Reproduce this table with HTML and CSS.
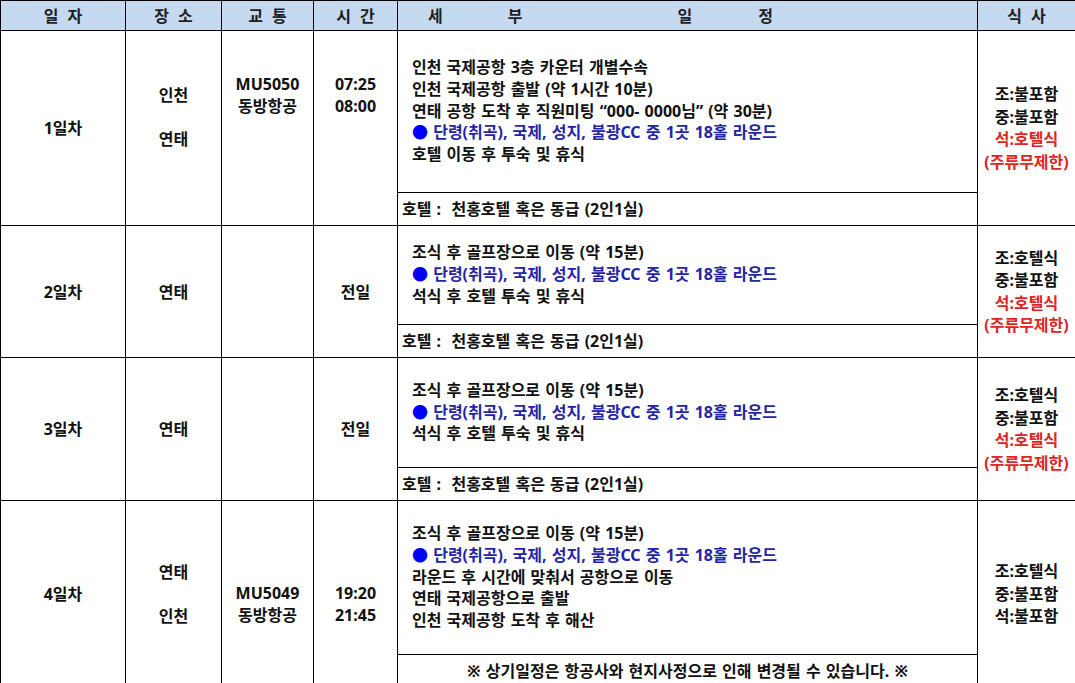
FILE: index.html
```html
<!DOCTYPE html>
<html lang="ko">
<head>
<meta charset="utf-8">
<title>일정표</title>
<link rel="stylesheet" href="styles.css">
</head>
<body>
<table class="sched">
  <colgroup>
    <col class="c-day"><col class="c-place"><col class="c-trans"><col class="c-time"><col class="c-detail"><col class="c-meal">
  </colgroup>
  <thead>
    <tr class="r-head">
      <th><span class="hd"><span>일</span><span>자</span></span></th>
      <th><span class="hd"><span>장</span><span>소</span></span></th>
      <th><span class="hd"><span>교</span><span>통</span></span></th>
      <th><span class="hd"><span>시</span><span>간</span></span></th>
      <th class="th-detail"><span class="hd-wide"><span class="w1">세</span><span class="w2">부</span><span class="w3">일</span><span class="w4">정</span></span></th>
      <th><span class="hd"><span>식</span><span>사</span></span></th>
    </tr>
  </thead>
  <tbody>
    <tr class="r1a">
      <td rowspan="2" class="ctr">1일차</td>
      <td rowspan="2" class="ctr pb22">인천<br><br>연태</td>
      <td rowspan="2" class="ctr pb66">MU5050<br>동방항공</td>
      <td rowspan="2" class="ctr pb66">07:25<br>08:00</td>
      <td class="detail">인천 국제공항 3층 카운터 개별수속<br>인천 국제공항 출발 (약 1시간 10분)<br>연태 공항 도착 후 직원미팅 “000- 0000님” (약 30분)<br><span class="blue"><span class="dot">●</span> 단령(취곡), 국제, 성지, 불광CC 중 1곳 18홀 라운드</span><br>호텔 이동 후 투숙 및 휴식</td>
      <td rowspan="2" class="ctr meal">조:불포함<br>중:불포함<br><span class="red">석:호텔식<br>(주류무제한)</span></td>
    </tr>
    <tr class="r-hotel">
      <td class="hotel">호텔 :&nbsp; 천홍호텔 혹은 동급 (2인1실)</td>
    </tr>

    <tr class="r2a">
      <td rowspan="2" class="ctr">2일차</td>
      <td rowspan="2" class="ctr">연태</td>
      <td rowspan="2" class="ctr"></td>
      <td rowspan="2" class="ctr">전일</td>
      <td class="detail">조식 후 골프장으로 이동 (약 15분)<br><span class="blue"><span class="dot">●</span> 단령(취곡), 국제, 성지, 불광CC 중 1곳 18홀 라운드</span><br>석식 후 호텔 투숙 및 휴식</td>
      <td rowspan="2" class="ctr meal">조:호텔식<br>중:불포함<br><span class="red">석:호텔식<br>(주류무제한)</span></td>
    </tr>
    <tr class="r-hotel">
      <td class="hotel">호텔 :&nbsp; 천홍호텔 혹은 동급 (2인1실)</td>
    </tr>

    <tr class="r3a">
      <td rowspan="2" class="ctr">3일차</td>
      <td rowspan="2" class="ctr">연태</td>
      <td rowspan="2" class="ctr"></td>
      <td rowspan="2" class="ctr">전일</td>
      <td class="detail">조식 후 골프장으로 이동 (약 15분)<br><span class="blue"><span class="dot">●</span> 단령(취곡), 국제, 성지, 불광CC 중 1곳 18홀 라운드</span><br>석식 후 호텔 투숙 및 휴식</td>
      <td rowspan="2" class="ctr meal">조:호텔식<br>중:불포함<br><span class="red">석:호텔식<br>(주류무제한)</span></td>
    </tr>
    <tr class="r-hotel">
      <td class="hotel">호텔 :&nbsp; 천홍호텔 혹은 동급 (2인1실)</td>
    </tr>

    <tr class="r4a">
      <td rowspan="2" class="ctr">4일차</td>
      <td rowspan="2" class="ctr">연태<br><br>인천</td>
      <td rowspan="2" class="ctr pt20">MU5049<br>동방항공</td>
      <td rowspan="2" class="ctr pt20">19:20<br>21:45</td>
      <td class="detail">조식 후 골프장으로 이동 (약 15분)<br><span class="blue"><span class="dot">●</span> 단령(취곡), 국제, 성지, 불광CC 중 1곳 18홀 라운드</span><br>라운드 후 시간에 맞춰서 공항으로 이동<br>연태 국제공항으로 출발<br>인천 국제공항 도착 후 해산</td>
      <td rowspan="2" class="ctr meal">조:호텔식<br>중:불포함<br>석:불포함</td>
    </tr>
    <tr class="r-hotel">
      <td class="note">※ 상기일정은 항공사와 현지사정으로 인해 변경될 수 있습니다. ※</td>
    </tr>
  </tbody>
</table>
</body>
</html>
```

FILE: styles.css
```css
html, body {
  margin: 0;
  padding: 0;
  background: #ffffff;
}

body {
  font-family: "Noto Sans", "Noto Sans CJK KR", sans-serif;
  font-size: 16px;
  font-weight: 700;
  color: #111111;
  word-spacing: 1px;
  overflow: hidden;
}

.sched {
  border-collapse: collapse;
  table-layout: fixed;
  width: 1075px;
  line-height: 22px;
}

.c-day { width: 125px; }
.c-place { width: 96px; }
.c-trans { width: 92px; }
.c-time { width: 84px; }
.c-detail { width: 580px; }
.c-meal { width: 98px; }

.sched th,
.sched td {
  border: 1px solid #000000;
  padding: 0;
  vertical-align: middle;
}

.sched th {
  background: #c5d9f1;
  color: #1e1e1e;
  font-weight: 700;
  height: 29px;
  line-height: 20px;
  text-align: center;
}

.hd {
  display: inline-flex;
  gap: 9px;
}

.th-detail {
  text-align: left;
}

.hd-wide {
  display: flex;
}

.hd-wide .w1 { margin-left: 30px; }
.hd-wide .w2 { margin-left: 65px; }
.hd-wide .w3 { margin-left: 155px; }
.hd-wide .w4 { margin-left: 66px; }

.r1a { height: 162px; }
.r2a { height: 99px; }
.r3a { height: 110px; }
.r4a { height: 154px; }
.r-hotel { height: 33px; }

.ctr {
  text-align: center;
}

.pb22 { padding-bottom: 22px !important; }
.pb66 { padding-bottom: 66px !important; }
.pt20 { padding-top: 20px !important; }

.detail {
  padding-left: 14px !important;
  line-height: 21.8px;
}

.hotel {
  padding-left: 4px !important;
}

.note {
  text-align: center;
}

.blue {
  color: #2424a6;
}

.dot {
  color: #0000ff;
}

.red {
  color: #e02424;
}

.meal {
  line-height: 22.5px;
}
```
